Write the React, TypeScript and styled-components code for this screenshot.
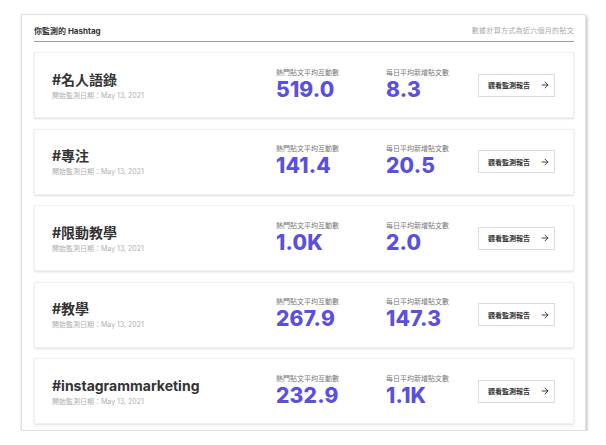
import React from 'react';
import styled, { createGlobalStyle } from 'styled-components';
import { ArrowRight } from 'lucide-react';

interface HashtagRow {
  tag: string;
  since: string;
  avgEngagement: string;
  dailyPosts: string;
}

const rows: HashtagRow[] = [
  { tag: '#名人語錄', since: 'May 13, 2021', avgEngagement: '519.0', dailyPosts: '8.3' },
  { tag: '#專注', since: 'May 13, 2021', avgEngagement: '141.4', dailyPosts: '20.5' },
  { tag: '#限動教學', since: 'May 13, 2021', avgEngagement: '1.0K', dailyPosts: '2.0' },
  { tag: '#教學', since: 'May 13, 2021', avgEngagement: '267.9', dailyPosts: '147.3' },
  { tag: '#instagrammarketing', since: 'May 13, 2021', avgEngagement: '232.9', dailyPosts: '1.1K' },
];

const App: React.FC = () => {
  return (
    <>
      <GlobalStyle />
      <Panel>
        <Header>
          <PanelTitle>你監測的 Hashtag</PanelTitle>
          <Note>數據計算方式為近六個月的貼文</Note>
        </Header>
        <List>
          {rows.map((row) => (
            <Card key={row.tag}>
              <TagBlock>
                <Tag>{row.tag}</Tag>
                <Since>開始監測日期：{row.since}</Since>
              </TagBlock>
              <Stat>
                <StatLabel>熱門貼文平均互動數</StatLabel>
                <StatValue>{row.avgEngagement}</StatValue>
              </Stat>
              <Stat>
                <StatLabel>每日平均新增貼文數</StatLabel>
                <StatValue>{row.dailyPosts}</StatValue>
              </Stat>
              <ReportButton>
                觀看監測報告
                <ArrowRight size={10} strokeWidth={2.2} />
              </ReportButton>
            </Card>
          ))}
        </List>
      </Panel>
    </>
  );
};

export default App;

const GlobalStyle = createGlobalStyle`
  body {
    margin: 0;
    background: #fff;
    font-family: Inter, 'Noto Sans CJK TC', sans-serif;
    color: #333;
  }
`;

const Panel = styled.div`
  box-sizing: border-box;
  margin: 14px 0 0 21px;
  width: 565px;
  height: 417px;
  padding: 0 11px 0 12px;
  background: #fff;
  border: 1px solid #e2e2e2;
  box-shadow: 1px 2px 3px rgba(0, 0, 0, 0.28);
  display: flex;
  flex-direction: column;
`;

const Header = styled.div`
  height: 27px;
  box-sizing: border-box;
  display: flex;
  justify-content: space-between;
  align-items: flex-end;
  padding-bottom: 5px;
  border-bottom: 1px solid #9a9a9a;
`;

const PanelTitle = styled.div`
  font-size: 8px;
  line-height: 10px;
  font-weight: 700;
  color: #333;
`;

const Note = styled.div`
  font-size: 7px;
  line-height: 10px;
  color: #a8a8a8;
  letter-spacing: 0.3px;
`;

const List = styled.div`
  display: flex;
  flex-direction: column;
  gap: 10.5px;
  padding-top: 10px;
`;

const Card = styled.div`
  box-sizing: border-box;
  height: 66px;
  padding: 0 19px 0 17px;
  display: grid;
  grid-template-columns: 224px 110px 92px 77px;
  align-items: center;
  background: #fff;
  border: 1px solid #f0f0f0;
  box-shadow: 0 1px 2px rgba(0, 0, 0, 0.12);
`;

const TagBlock = styled.div`
  display: flex;
  flex-direction: column;
  gap: 3px;
`;

const Tag = styled.div`
  font-size: 14px;
  line-height: 17px;
  font-weight: 700;
  color: #333;
`;

const Since = styled.div`
  font-size: 7px;
  line-height: 9px;
  color: #b0b0b0;
`;

const Stat = styled.div`
  display: flex;
  flex-direction: column;
  gap: 1px;
  margin-top: -2px;
`;

const StatLabel = styled.div`
  font-size: 7px;
  line-height: 9px;
  color: #777;
`;

const StatValue = styled.div`
  font-size: 21px;
  line-height: 23px;
  font-weight: 800;
  color: #5a4fe2;
  letter-spacing: 0.2px;
`;

const ReportButton = styled.button`
  box-sizing: border-box;
  width: 77px;
  height: 23px;
  padding: 0 0 0 9px;
  display: flex;
  align-items: center;
  gap: 10px;
  background: #fff;
  border: 1px solid #dcdcdc;
  font-family: inherit;
  font-size: 7px;
  font-weight: 700;
  color: #333;
  cursor: pointer;
`;
